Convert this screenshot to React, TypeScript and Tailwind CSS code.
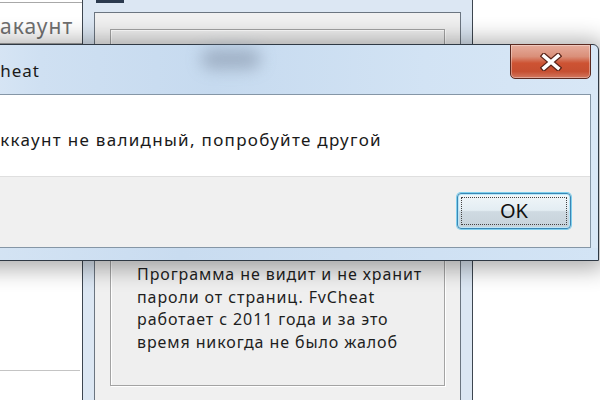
import React from 'react';

const font = { fontFamily: '"Noto Sans", "Open Sans", sans-serif' };

const CloseGlyph = () => (
  <svg width="22" height="18" viewBox="0 0 22 18">
    <path d="M4 3 L18 15 M18 3 L4 15" stroke="#5a2419" strokeWidth="6" strokeLinecap="square" />
    <path d="M4 3 L18 15 M18 3 L4 15" stroke="#ffffff" strokeWidth="3.6" strokeLinecap="square" />
  </svg>
);

const App = () => {
  return (
    <div className="relative w-[600px] h-[400px] overflow-hidden bg-white" style={font}>
      {/* left background window */}
      <div className="absolute left-0 top-0 w-[83px] h-[400px] bg-white">
        <div className="mt-[2px] h-[42px] border-y border-[#a8a8a8] bg-white flex items-center">
          <span className="text-[21px] leading-none tracking-[1px] text-[#707070] mt-[6px]">акаунт</span>
        </div>
        <div className="mt-[326px] h-px w-[80px] bg-[#c4c4c4]"></div>
      </div>

      {/* middle background window */}
      <div className="absolute left-[82px] top-0 w-[391px] h-[400px] border-x border-[#3d4650] bg-[#dce7f3] pt-[12px] pl-[11px]">
        <div className="absolute left-[13px] top-0 w-[28px] h-[3px] bg-[#2b3a4e]"></div>
        <div className="w-[367px] h-[400px] border-x border-t border-[#6b7580] bg-[#f0f0f0] pl-[15px] pt-[16px]">
          <div className="w-[335px] h-[357px] border border-[#a3a3a3] shadow-[inset_1px_1px_0_#ffffff,1px_1px_0_#ffffff] bg-[#efefef] pt-[233px] pl-[26px]">
            <p className="text-[16px] leading-[22.5px] tracking-[0.9px] text-[#1e1e1e]">
              Программа не видит и не хранит
              <br />
              пароли от страниц. FvCheat
              <br />
              работает с 2011 года и за это
              <br />
              время никогда не было жалоб
            </p>
          </div>
        </div>
      </div>

      {/* message box */}
      <div className="absolute left-[-100px] top-[44px] w-[699px] h-[217px] border border-[#2f3944] rounded-t-[6px] bg-[linear-gradient(90deg,#e6eff8_0%,#cfe0f2_20%,#c6daef_45%,#d2e3f4_75%,#d8e7f6_100%)] shadow-[0_2px_22px_6px_rgba(0,0,0,0.32)] flex flex-col">
        <div className="relative h-[49px] shrink-0 flex items-center pl-[68px]">
          <div className="absolute left-[300px] top-[4px] w-[60px] h-[20px] rounded-full bg-[#8d9db2] blur-[8px] opacity-70"></div>
          <span className="relative text-[17px] tracking-[1px] text-[#1a1a1a] mt-[3px]">FvCheat</span>
          <div className="absolute right-[7px] top-[-1px] w-[81px] h-[35px] rounded-b-[5px] border border-[#5b2a21] bg-[linear-gradient(180deg,#e6ad9d_0%,#da8f79_35%,#cd5333_55%,#c64f31_80%,#d27860_100%)] shadow-[inset_0_0_0_1px_rgba(255,255,255,0.35)] flex items-center justify-center">
            <CloseGlyph />
          </div>
        </div>
        <div className="mr-[7px] border border-[#8596a6] flex flex-col">
          <div className="h-[81px] bg-white flex items-center pl-[86px]">
            <span className="text-[17px] tracking-[1.3px] text-[#1a1a1a] mt-[8px]">Аккаунт не валидный, попробуйте другой</span>
          </div>
          <div className="h-[71px] bg-[#f0f0f0] border-t border-[#dfdfdf] flex justify-end items-start pt-[16px] pr-[19px]">
            <div className="w-[114px] h-[36px] rounded-[4px] border border-[#3b86b4] shadow-[0_0_0_1px_#7fd0ee,inset_0_0_0_1px_#b8e6f8] bg-[linear-gradient(180deg,#f1f6f9_0%,#e3edf3_48%,#cfdae2_52%,#c6d2da_100%)] p-[3px]">
              <div className="w-full h-full border border-dotted border-[#444] flex items-center justify-center">
                <span className="text-[20px] leading-none text-[#111]">OK</span>
              </div>
            </div>
          </div>
        </div>
        <div className="flex-1 bg-[linear-gradient(90deg,#d9e7f5,#c9dcf0_40%,#d3e4f5)]"></div>
      </div>
    </div>
  );
};

export default App;
